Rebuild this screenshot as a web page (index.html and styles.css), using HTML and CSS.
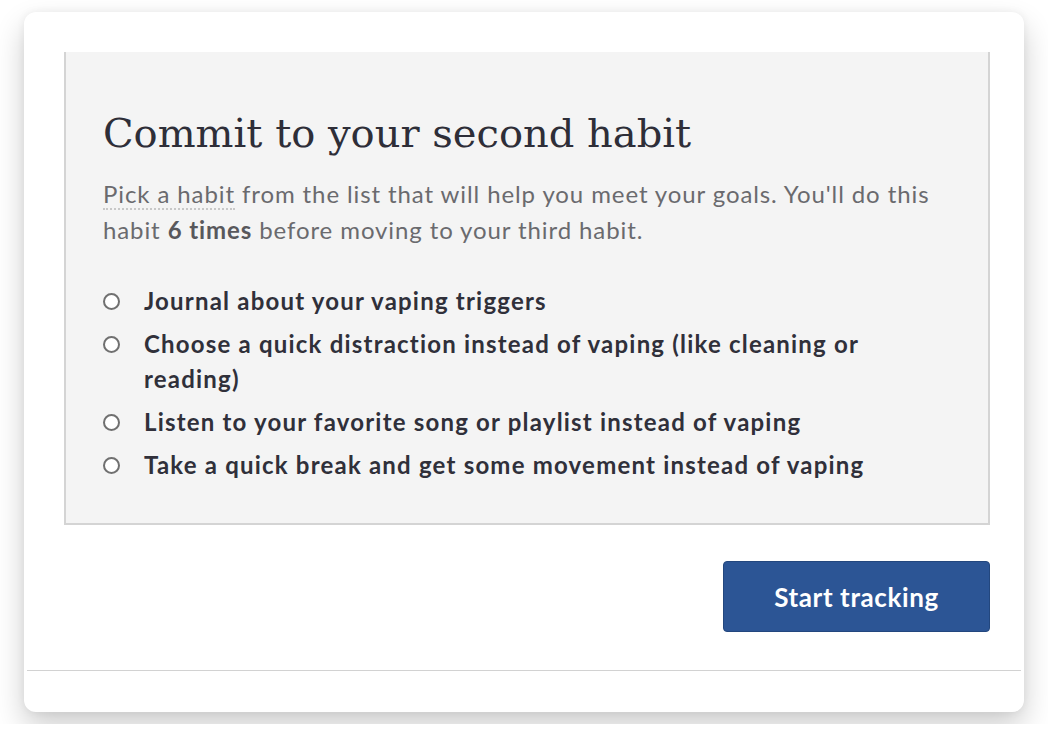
FILE: index.html
```html
<!DOCTYPE html>
<html>
<head>
<meta charset="utf-8">
<link rel="stylesheet" href="styles.css">
</head>
<body>
<div class="card">
  <div class="panel">
    <h1 class="title">Commit to your second habit</h1>
    <p class="intro"><span class="hint">Pick a habit</span> from the list that will help you meet your goals. You'll do this habit <strong>6 times</strong> before moving to your third habit.</p>
    <ul class="options">
      <li class="option"><span class="radio"></span><span class="label">Journal about your vaping triggers</span></li>
      <li class="option"><span class="radio"></span><span class="label">Choose a quick distraction instead of vaping (like cleaning or reading)</span></li>
      <li class="option"><span class="radio"></span><span class="label">Listen to your favorite song or playlist instead of vaping</span></li>
      <li class="option"><span class="radio"></span><span class="label">Take a quick break and get some movement instead of vaping</span></li>
    </ul>
  </div>
  <div class="actions">
    <button class="btn">Start tracking</button>
  </div>
  <div class="divider"></div>
</div>
</body>
</html>
```

FILE: styles.css
```css
html, body {
  margin: 0;
  padding: 0;
  background: #ffffff;
}
body {
  padding: 12px 24px;
  font-family: Lato, "Open Sans", sans-serif;
}
.card {
  width: 1000px;
  height: 700px;
  box-sizing: border-box;
  background: #ffffff;
  border-radius: 12px;
  box-shadow: 0 14px 30px rgba(0, 0, 0, 0.2), 0 0 8px rgba(0, 0, 0, 0.06);
  padding-top: 40px;
  display: flex;
  flex-direction: column;
}
.panel {
  margin: 0 34px 0 40px;
  background: #f4f4f4;
  border: 2px solid #d4d4d4;
  border-top: none;
  height: 473px;
  box-sizing: border-box;
  padding: 57px 40px 0 37px;
}
.title {
  margin: 0;
  font-family: "DejaVu Serif", serif;
  font-weight: normal;
  font-size: 40px;
  line-height: 48px;
  color: #2e2e38;
}
.intro {
  margin: 19px 0 0;
  font-size: 24px;
  line-height: 36px;
  letter-spacing: 0.9px;
  color: #6a6a6e;
}
.intro strong {
  font-weight: 700;
  color: #58585c;
}
.hint {
  border-bottom: 2px dotted #c8c8c8;
}
.options {
  list-style: none;
  margin: 35px 0 0;
  padding: 0;
}
.option {
  display: flex;
  align-items: flex-start;
  margin-bottom: 8px;
}
.radio {
  flex: none;
  width: 13px;
  height: 13px;
  border: 2px solid #707070;
  border-radius: 50%;
  background: #fff;
  margin: 10px 24px 0 0;
}
.label {
  font-size: 24px;
  line-height: 35px;
  font-weight: 700;
  letter-spacing: 1.2px;
  color: #30303a;
  max-width: 760px;
}
.actions {
  display: flex;
  justify-content: flex-end;
  margin: 36px 34px 0 0;
}
.btn {
  width: 267px;
  height: 71px;
  background: #2c5595;
  border: 1px solid #23477e;
  border-radius: 4px;
  color: #ffffff;
  font-family: Lato, sans-serif;
  font-weight: 700;
  font-size: 26px;
  letter-spacing: 0.6px;
}
.divider {
  margin: 38px 3px 0;
  height: 1px;
  background: #d2d2d2;
}
```
